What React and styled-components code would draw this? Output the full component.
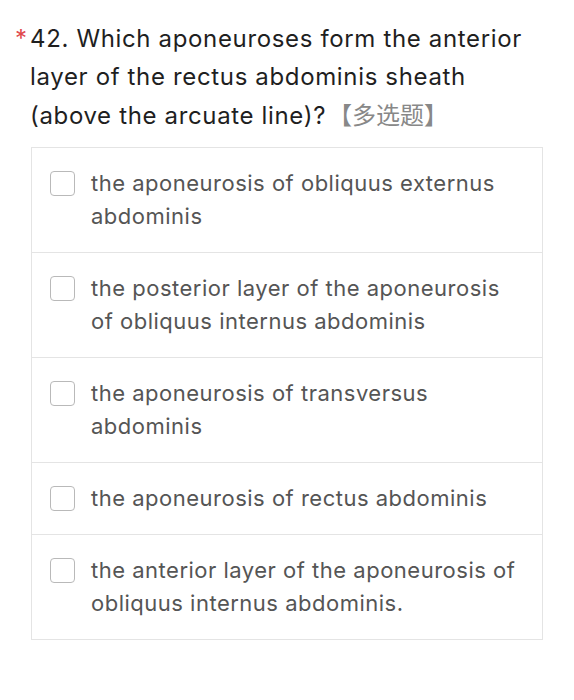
import React from "react";
import styled, { createGlobalStyle } from "styled-components";

const Global = createGlobalStyle`
  html, body { margin: 0; padding: 0; background: #fff; }
  body { font-family: Inter, "Noto Sans CJK SC", sans-serif; }
`;

const Page = styled.div`
  padding: 20px 31px 0 31px;
`;

const Title = styled.div`
  position: relative;
  margin-left: -1px;
  font-size: 24px;
  line-height: 37.5px;
  letter-spacing: 0.65px;
  color: #1f1f1f;
  margin-bottom: 12px;
`;

const Star = styled.span`
  position: absolute;
  left: -15px;
  top: 0;
  color: #e0474c;
`;

const Tag = styled.span`
  color: #888;
  letter-spacing: 0;
  margin-left: 2px;
  font-family: "Noto Sans CJK SC", sans-serif;
`;

const List = styled.div`
  border: 1px solid #e4e4e4;
  width: 510px;
`;

const Row = styled.label`
  display: flex;
  align-items: flex-start;
  gap: 16px;
  padding: 19px 20px 19px 18px;
  border-top: 1px solid #e4e4e4;
  &:first-child { border-top: none; }
`;

const Box = styled.span`
  flex: none;
  width: 25px;
  height: 25px;
  border: 1px solid #b9b9b9;
  border-radius: 4px;
  margin-top: 4px;
  box-sizing: border-box;
`;

const Text = styled.span`
  font-size: 22px;
  line-height: 33px;
  letter-spacing: 0.5px;
  color: #555;
`;

const options = [
  "the aponeurosis of obliquus externus abdominis",
  "the posterior layer of the aponeurosis of obliquus internus abdominis",
  "the aponeurosis of transversus abdominis",
  "the aponeurosis of rectus abdominis",
  "the anterior layer of the aponeurosis of obliquus internus abdominis.",
];

export default function App() {
  return (
    <Page>
      <Global />
      <Title>
        <Star>*</Star>42. Which aponeuroses form the anterior layer of the rectus abdominis sheath (above the arcuate line)?<Tag>【多选题】</Tag>
      </Title>
      <List>
        {options.map((o) => (
          <Row key={o}>
            <Box />
            <Text>{o}</Text>
          </Row>
        ))}
      </List>
    </Page>
  );
}
